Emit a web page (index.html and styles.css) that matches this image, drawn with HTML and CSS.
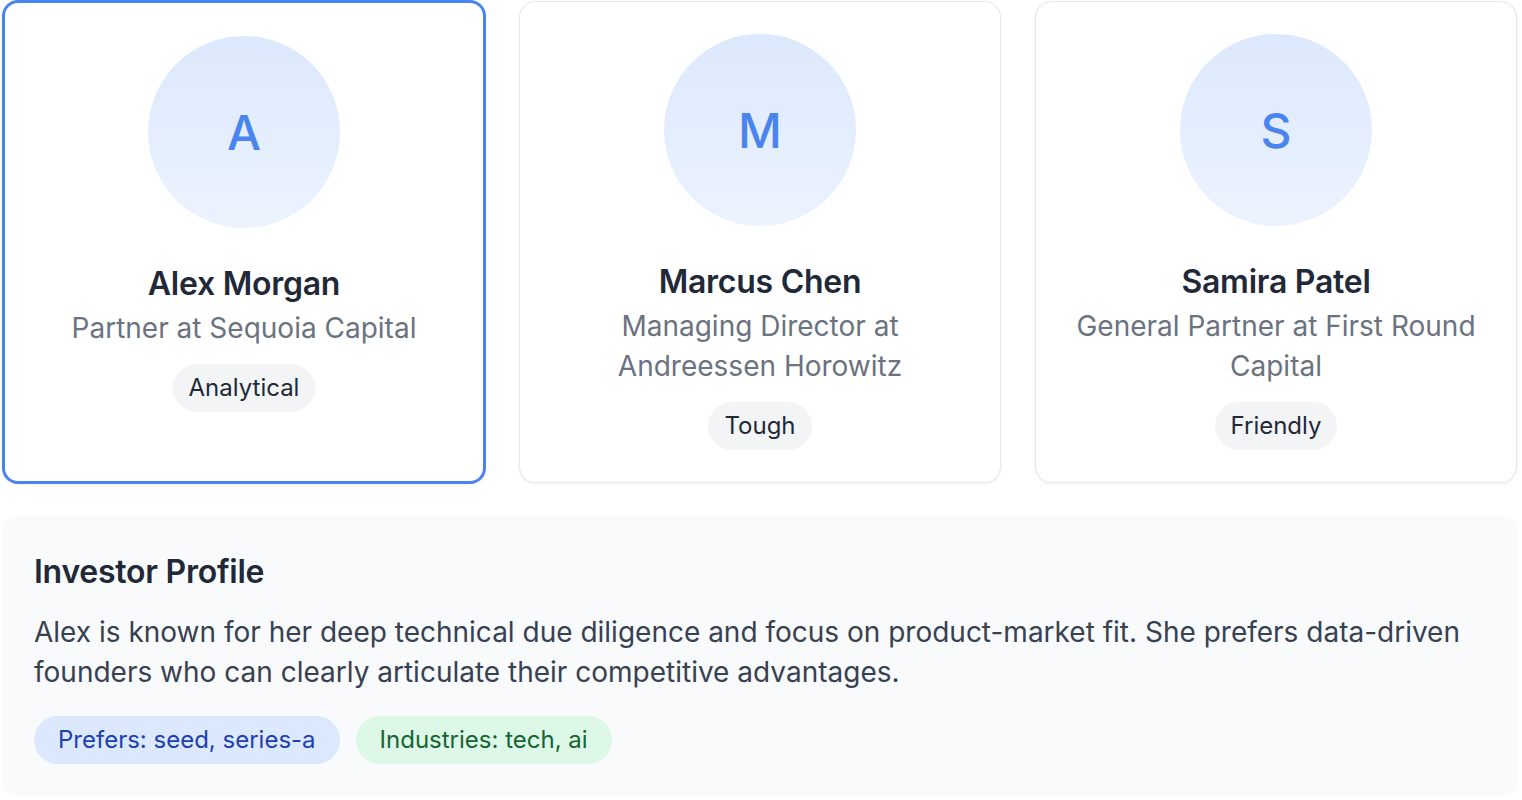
FILE: index.html
```html
<!DOCTYPE html>
<html lang="en">
<head>
<meta charset="utf-8">
<title>Investors</title>
<link rel="stylesheet" href="styles.css">
</head>
<body>
<div class="page">
  <div class="cards">
    <div class="card selected">
      <div class="avatar">A</div>
      <div class="name">Alex Morgan</div>
      <div class="role">Partner at Sequoia Capital</div>
      <span class="tag">Analytical</span>
    </div>
    <div class="card">
      <div class="avatar">M</div>
      <div class="name">Marcus Chen</div>
      <div class="role">Managing Director at Andreessen Horowitz</div>
      <span class="tag">Tough</span>
    </div>
    <div class="card">
      <div class="avatar">S</div>
      <div class="name">Samira Patel</div>
      <div class="role">General Partner at First Round Capital</div>
      <span class="tag">Friendly</span>
    </div>
  </div>
  <section class="profile">
    <h2 class="profile-title">Investor Profile</h2>
    <p class="profile-text">Alex is known for her deep technical due diligence and focus on product-market fit. She prefers data-driven founders who can clearly articulate their competitive advantages.</p>
    <div class="chips">
      <span class="chip chip-blue">Prefers: seed, series-a</span>
      <span class="chip chip-green">Industries: tech, ai</span>
    </div>
  </section>
</div>
</body>
</html>
```

FILE: styles.css
```css
* { box-sizing: border-box; }
html, body { margin: 0; padding: 0; background: #ffffff; }
body {
  font-family: Inter, "Noto Sans", "Liberation Sans", sans-serif;
  color: #1f2937;
}
.page {
  width: 1522px;
  padding: 0 4px 0 2px;
}
.cards {
  display: grid;
  grid-template-columns: repeat(3, 482px);
  gap: 34px;
  padding: 1px 1px 0;
}
.card {
  display: flex;
  flex-direction: column;
  align-items: center;
  text-align: center;
  background: #ffffff;
  border: 1px solid #e5e7eb;
  border-radius: 16px;
  padding: 32px 32px;
  box-shadow: 0 1px 3px rgba(0, 0, 0, 0.06);
}
.card.selected {
  border: 3px solid #4a84ee;
  margin: -1px;
  padding-top: 33px;
}
.avatar {
  width: 192px;
  height: 192px;
  border-radius: 50%;
  background: linear-gradient(to bottom, #dce8fc, #ecf3fe);
  color: #4a84ee;
  font-size: 48px;
  font-weight: 500;
  display: flex;
  align-items: center;
  justify-content: center;
  flex-shrink: 0;
}
.name {
  margin-top: 32px;
  font-size: 32px;
  line-height: 48px;
  font-weight: 600;
  letter-spacing: -0.25px;
  color: #1f2937;
}
.role {
  font-size: 28px;
  line-height: 40px;
  color: #6b7280;
  max-width: 418px;
}
.tag {
  margin-top: 16px;
  display: inline-block;
  background: #f3f4f6;
  color: #1f2937;
  font-size: 24px;
  line-height: 32px;
  padding: 8px 16px;
  border-radius: 999px;
}
.profile {
  margin-top: 33px;
  background: #f9fafb;
  border-radius: 16px;
  padding: 32px;
}
.profile-title {
  margin: 0;
  font-size: 32px;
  line-height: 48px;
  font-weight: 600;
  letter-spacing: -0.25px;
  color: #1f2937;
}
.profile-text {
  margin: 16px 0 0;
  font-size: 28px;
  line-height: 40px;
  color: #374151;
}
.chips {
  margin-top: 24px;
  display: flex;
  gap: 16px;
}
.chip {
  font-size: 24px;
  line-height: 32px;
  padding: 8px 24px;
  border-radius: 999px;
}
.chip-blue { background: #dbe8fd; color: #1e40af; }
.chip-green { background: #ddf8e6; color: #166534; }
```
